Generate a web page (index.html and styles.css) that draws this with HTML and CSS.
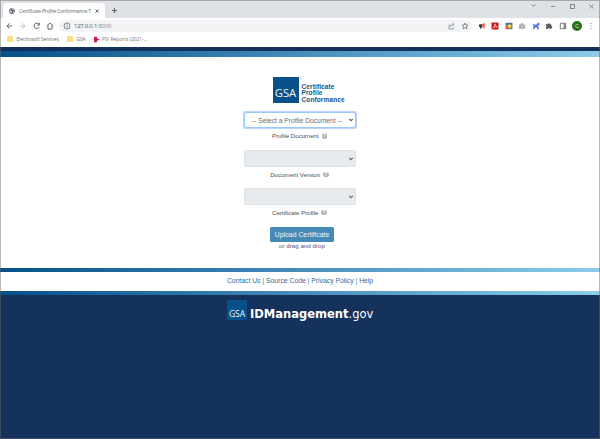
FILE: index.html
```html
<!DOCTYPE html>
<html lang="en">
<head>
<meta charset="utf-8">
<title>Certificate Profile Conformance Tool</title>
<link rel="stylesheet" href="styles.css">
</head>
<body>
<div class="window">
  <header class="tabs">
    <div class="tab">
      <svg class="globe" viewBox="0 0 16 16"><circle cx="8" cy="8" r="7.5" fill="#53585d"/><path d="M2 5l5 2 1 3-2 4-3-4zM9 1l4 2-2 3-3-1zM11 9l4-1-3 5-2-2z" fill="#e3e5e8"/></svg>
      <span class="tab-title">Certificate Profile Conformance T</span>
      <svg class="close" viewBox="0 0 8 8"><path d="M1 1l6 6M7 1L1 7" stroke="#3c4043" stroke-width="1.6"/></svg>
    </div>
    <svg class="plus" viewBox="0 0 10 10"><path d="M5 0v10M0 5h10" stroke="#5b6065" stroke-width="2"/></svg>
    <svg class="controls" viewBox="0 0 64 8" fill="none" stroke="#6a6e73" stroke-width=".8"><path d="M1.500 2.500l2 2 2-2M21 4.500h4M40.500 2.500h4v4h-4zM59.500 2.500l4 4M63.500 2.500l-4 4"/></svg>
  </header>
  <div class="toolbar">
    <svg class="nav" viewBox="0 0 50 10" fill="none" stroke="#62676b" stroke-width="1"><path d="M6 5H1M3.500 2.300L1 5l2.500 2.700"/><path d="M14 5h5M16.500 2.300L19 5l-2.500 2.700" stroke="#b9bcc0"/><path d="M33 3.300A2.700 2.700 0 1 0 33.200 6M33.400 1.900v2.200h-2.200"/><path d="M40.800 5L44 2l3.200 3M42 4.500V8h4V4.500"/></svg>
    <div class="address">
      <svg class="info" viewBox="0 0 8 8"><circle cx="4" cy="4" r="3" fill="none" stroke="#676b70" stroke-width=".8"/><path d="M4 3.500v2M4 2v.8" stroke="#676b70" stroke-width=".8"/></svg>
      <span class="url">127.0.0.1<i>:8000</i></span>
      <svg class="page-actions" viewBox="0 0 20 8" fill="none" stroke="#8b8f94" stroke-width=".8"><path d="M2.500 3H1v4h4.500V5.500M2.300 5.300c.3-2 1.700-2.700 3.200-2.700M4.500 1l1.500 1.500L4.500 4"/><path d="M17 1l.9 2 2.100.2-1.600 1.400.5 2.200L17 5.600l-1.900 1.200.5-2.200L14 3.200l2.100-.2z" stroke="#6c7074"/></svg>
    </div>
    <div class="extensions">
      <svg viewBox="0 0 8 8"><path d="M1 2.500l3-.5v4l-1.200-.5v1.500H2V5.200l-1-.5z" fill="#343d52"/><path d="M4 2l3-1-.6 6L4.300 5z" fill="#f26635"/></svg>
      <svg viewBox="0 0 8 8"><rect x=".5" y=".5" width="7" height="7" rx=".8" fill="#c61c18"/><path d="M4 1.800C4 4 2.500 5.800 1.800 6 2.500 4.800 5 4.500 6.300 5 4.600 4.500 4 3 4 1.800z" fill="none" stroke="#fff" stroke-width=".6"/></svg>
      <svg viewBox="0 0 8 8"><path d="M.5.800h7v3h-7z" fill="#52719a"/><path d="M.5 3.800H4v3.500H.5z" fill="#d85a41"/><path d="M4 4h3.500v3.300H4z" fill="#5b9963"/><path d="M3 2.600h3v3H3z" fill="#f2dc65"/></svg>
      <svg viewBox="0 0 8 8"><path d="M.8 2.400h1.500L3 1.300h2l.7 1.100h1.500v4.400H.8z" fill="#b6b8ba"/><circle cx="4" cy="4.500" r="1.400" fill="#eee" stroke="#777" stroke-width=".6"/></svg>
      <svg viewBox="0 0 8 8"><path d="M.3 1.300l1.400 1.200h2.800L6 .8l1.700.3-.8 2.200-.6 1.200.7 2.800H5.300L4.800 5.600H3.200L2.400 7.300H.9l.5-3z" fill="#5b77ea"/></svg>
      <svg viewBox="0 0 8 8"><path d="M1 2.300h1.700a1 1 0 1 1 2 0h1.600v1.600a1 1 0 1 1 0 2V7H4.800a1 1 0 0 0-2 0H1V5.500a1 1 0 0 0 0-1.700z" fill="#54595e"/></svg>
      <svg viewBox="0 0 8 8"><path d="M1.300 1.300h5.400v5.400H1.300z" fill="none" stroke="#7c8084"/><path d="M4.600 1h2.100v6H4.600z" fill="#7c8084"/></svg>
    </div>
    <span class="avatar">C</span>
    <svg class="more" viewBox="0 0 2 8" fill="#777b80"><circle cx="1" cy="1.500" r=".6"/><circle cx="1" cy="4" r=".6"/><circle cx="1" cy="6.500" r=".6"/></svg>
  </div>
  <nav class="bookmarks">
    <span class="folder"></span><span class="bm-services">Electrosoft Services</span>
    <span class="folder"></span><span class="bm-gsa">GSA</span>
    <svg class="piv" viewBox="0 0 8 8"><path d="M1 1l3-.5L4.800 2.500 7.500 4 4.700 5.500 4 7.500 1 7 1.500 5 .5 4 1.500 3z" fill="#cf1550"/></svg><span class="bm-piv">PIV Reports (2021-...</span>
  </nav>
  <div class="navy-line"></div>
  <div class="top-stripe"></div>
  <main>
    <div class="brand">
      <div class="gsa">GSA</div>
      <span class="dot"></span>
      <div class="brand-name">Certificate<br>Profile<br>Conformance</div>
    </div>
    <div class="select focused"><span class="select-text">-- Select a Profile Document --</span><svg class="chevron" viewBox="0 0 6 4"><path d="M1.200 .8l1.800 1.800 1.800-1.800" fill="none" stroke="#5b5f64" stroke-width="1.100"/></svg></div>
    <div class="label"><span class="l-document">Profile Document</span><span class="help">?</span></div>
    <div class="select"><svg class="chevron" viewBox="0 0 6 4"><path d="M1.200 .8l1.800 1.800 1.800-1.800" fill="none" stroke="#63686d" stroke-width="1.100"/></svg></div>
    <div class="label"><span class="l-version">Document Version</span><span class="help">?</span></div>
    <div class="select"><svg class="chevron" viewBox="0 0 6 4"><path d="M1.200 .8l1.800 1.800 1.800-1.800" fill="none" stroke="#63686d" stroke-width="1.100"/></svg></div>
    <div class="label"><span class="l-profile">Certificate Profile</span><span class="help">?</span></div>
    <div class="upload">Upload Certificate</div>
    <div class="drop">or drag and drop</div>
  </main>
  <div class="stripe"></div>
  <nav class="links"><span><a>Contact Us</a> | <a>Source Code</a> | <a>Privacy Policy</a> | <a>Help</a></span></nav>
  <div class="stripe"></div>
  <footer>
    <div class="gsa small">GSA</div>
    <div class="site"><b>IDManagement</b>.gov</div>
  </footer>
</div>
</body>
</html>
```
FILE: styles.css
```css
* { box-sizing: border-box; }
body { margin: 0; font-family: "Liberation Sans", Arial, sans-serif; background: #15325d; }
svg { display: block; flex: none; }
.window {
  height: 439px; display: flex; flex-direction: column; overflow: hidden;
  background: #fff; white-space: nowrap; position: relative;
}
.window::after {
  content: ""; position: absolute; inset: 0; pointer-events: none;
  border: 1px solid rgba(105, 105, 105, .48);
}
.tabs { height: 18px; flex: none; display: flex; align-items: center; background: #dee1e6; padding-left: 3px; }
.tab {
  width: 102px; height: 15px; align-self: flex-end; background: #fff;
  border-radius: 4px 4px 0 0; display: flex; align-items: center; padding: 0 5px 0 6px;
}
.globe { width: 6px; height: 6px; }
.tab-title {
  margin-left: 4px; width: 76px; color: #666a6f;
  font: 5.200px/10px "Open Sans", sans-serif; letter-spacing: -.25px;
}
.close { width: 4px; height: 4px; }
.plus { width: 5px; height: 5px; margin: 3px 0 0 7px; }
.controls { width: 64px; height: 8px; margin: -6px 6px 0 auto; }
.toolbar { height: 15px; flex: none; display: flex; align-items: center; padding-left: 6px; }
.nav { width: 50px; height: 10px; }
.address {
  width: 413px; height: 12px; margin-left: 3px; background: #f1f3f4;
  border-radius: 6px; display: flex; align-items: center; padding: 0 4px;
}
.info { width: 8px; height: 8px; }
.url { margin-left: 3px; color: #4f5357; font: 5.900px/10px "Open Sans", sans-serif; letter-spacing: -.2px; }
.url i { font-style: normal; color: #85898d; }
.page-actions { width: 20px; height: 8px; margin-left: auto; }
.extensions { display: flex; gap: 5.600px; margin-left: 5.500px; }
.extensions svg { width: 8px; height: 8px; }
.avatar {
  width: 10px; height: 10px; margin-left: 5px; border-radius: 50%;
  background: #28701d; color: #dceada; font-size: 5px; line-height: 10px; text-align: center;
}
.more { width: 2px; height: 8px; margin-left: 8px; }
.bookmarks {
  height: 14px; flex: none; display: flex; align-items: center; padding: 0 0 2px 7px;
  font: 4.900px/9px "Open Sans", sans-serif; color: #6b6f74;
}
.folder { width: 6px; height: 6px; border-radius: 1px; background: #fddf83; }
.bm-services { width: 43px; margin: 0 7px 0 3.500px; letter-spacing: -.1px; }
.bm-gsa { width: 10px; margin: 0 6px 0 4px; letter-spacing: -.1px; }
.piv { width: 7px; height: 7px; }
.bm-piv { margin-left: 2.500px; }
.navy-line { height: 4px; flex: none; background: #14305c; }
.top-stripe, .stripe { flex: none; background: linear-gradient(90deg, #055087, #2f78ab 34%, #5da2cc 66%, #8bcdea); }
.top-stripe { height: 5.500px; }
.stripe { height: 4px; }
main { height: 211.500px; flex: none; display: flex; flex-direction: column; align-items: center; padding-top: 20.500px; }
.brand { width: 74px; height: 26px; display: flex; align-items: center; margin-left: 19px; }
.gsa {
  width: 26px; height: 26px; flex: none; background: #075089; color: #f2f6f9;
  font: 11.300px/32px "Open Sans", sans-serif; letter-spacing: -.1px; text-align: center; overflow: hidden;
}
.dot { width: 1px; height: 1px; margin: 1px 0 0 1px; align-self: flex-start; background: #8faec7; }
.brand-name {
  margin: 7px 0 0 1px; font-size: 6.500px; line-height: 6.500px;
  font-weight: bold; color: #15527f; letter-spacing: .12px;
}
.select {
  width: 112px; height: 17px; border: 1px solid #dce2e6; border-radius: 2px;
  background: #e7ebee; display: flex; align-items: center; justify-content: flex-end; padding-right: 1px;
}
.select.focused {
  margin-top: 9px; height: 16px; border-color: #9bc9fb; background: #fff;
  box-shadow: 0 0 0 1px #b5d7fb;
}
.select-text { margin-right: 5px; width: 91px; color: #6a6f74; font-size: 6.700px; }
.chevron { width: 6px; height: 4px; }
.label {
  height: 21px; display: flex; align-items: flex-start; gap: 3px; margin-right: 1px;
  font-size: 6.100px; line-height: 8px; padding-top: 3.500px; color: #4b4f53;
}
.focused + .label { height: 22px; padding-top: 4px; }
.help {
  width: 5.500px; height: 5.500px; margin-top: 1px; border-radius: 50%;
  background: #b0b3b6; color: #fff; font: bold 4.500px/5.500px "Liberation Sans", sans-serif; text-align: center;
}
.upload {
  width: 64px; height: 15px; margin: 1px 0 0 4px; border-radius: 1.500px; background: #468ab5;
  color: #eff6fa; font-size: 6.850px; line-height: 15px; text-align: center;
}
.drop { margin-left: 4px; color: #51557a; font-size: 6.200px; line-height: 8px; }
.links { height: 18.500px; flex: none; text-align: center; font-size: 6.800px; line-height: 18px; color: #4e6f89; }
.links a { color: #2f6d9c; }
footer { flex: 1; display: flex; align-items: flex-start; padding: 5px 0 0 227px; background: #15325d; color: #fff; }
.small { width: 20px; height: 20px; font-size: 8.500px; line-height: 28px; }
.site { margin-left: 3px; font: 11.500px/29px "DejaVu Sans", sans-serif; }
```
